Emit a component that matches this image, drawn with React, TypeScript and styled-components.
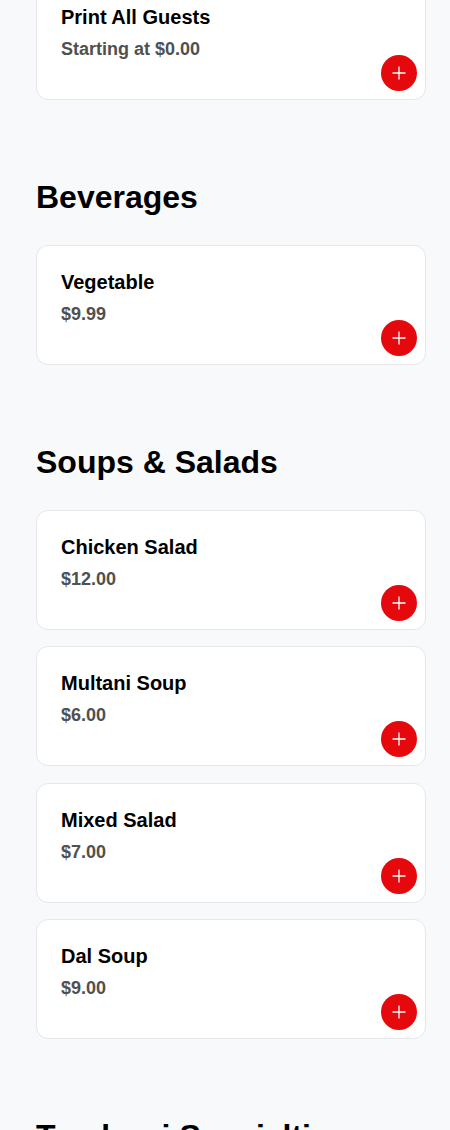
import React from "react";
import styled, { createGlobalStyle } from "styled-components";

const Global = createGlobalStyle`
  html, body { margin: 0; padding: 0; background: #f8f9fb; }
  body { font-family: "Liberation Sans", Arial, sans-serif; color: #000; }
`;

const Page = styled.div`
  padding: 0 24px 0 36px;
  margin-top: -20px;
  display: flex;
  flex-direction: column;
  gap: 77px;
`;

const Section = styled.section`
  display: flex;
  flex-direction: column;
`;

const Heading = styled.h2`
  margin: 0 0 28px;
  font-size: 32px;
  line-height: 40px;
  font-weight: 700;
`;

const List = styled.div`
  display: flex;
  flex-direction: column;
  gap: 16.4px;
`;

const Card = styled.div`
  position: relative;
  box-sizing: border-box;
  height: 120px;
  background: #fff;
  border: 1px solid #e5e7eb;
  border-radius: 12px;
  padding: 22px 24px;
  display: flex;
  flex-direction: column;
  gap: 4px;
`;

const Title = styled.div`
  font-size: 20px;
  line-height: 28px;
  font-weight: 700;
  color: #000;
`;

const Price = styled.div`
  font-size: 18px;
  line-height: 28px;
  font-weight: 700;
  color: #505050;
`;

const AddButton = styled.button`
  position: absolute;
  right: 8px;
  bottom: 8px;
  width: 36px;
  height: 36px;
  border-radius: 50%;
  border: none;
  padding: 0;
  background: #e5080c;
  display: flex;
  align-items: center;
  justify-content: center;
  cursor: pointer;
`;

const PlusIcon = () => (
  <svg width="16" height="16" viewBox="0 0 16 16" fill="none">
    <path d="M8 1.5v13M1.5 8h13" stroke="#fff" strokeWidth="1.3" />
  </svg>
);

type Item = { name: string; price: string };

const Item = ({ item }: { item: Item }) => (
  <Card>
    <Title>{item.name}</Title>
    <Price>{item.price}</Price>
    <AddButton aria-label="Add">
      <PlusIcon />
    </AddButton>
  </Card>
);

const sections: { title?: string; items: Item[] }[] = [
  { items: [{ name: "Print All Guests", price: "Starting at $0.00" }] },
  { title: "Beverages", items: [{ name: "Vegetable", price: "$9.99" }] },
  {
    title: "Soups & Salads",
    items: [
      { name: "Chicken Salad", price: "$12.00" },
      { name: "Multani Soup", price: "$6.00" },
      { name: "Mixed Salad", price: "$7.00" },
      { name: "Dal Soup", price: "$9.00" },
    ],
  },
  { title: "Tandoori Specialties", items: [] },
];

export default function App() {
  return (
    <>
      <Global />
      <Page>
        {sections.map((s, i) => (
          <Section key={i}>
            {s.title && <Heading>{s.title}</Heading>}
            {s.items.length > 0 && (
              <List>
                {s.items.map((it) => (
                  <Item key={it.name} item={it} />
                ))}
              </List>
            )}
          </Section>
        ))}
      </Page>
    </>
  );
}
